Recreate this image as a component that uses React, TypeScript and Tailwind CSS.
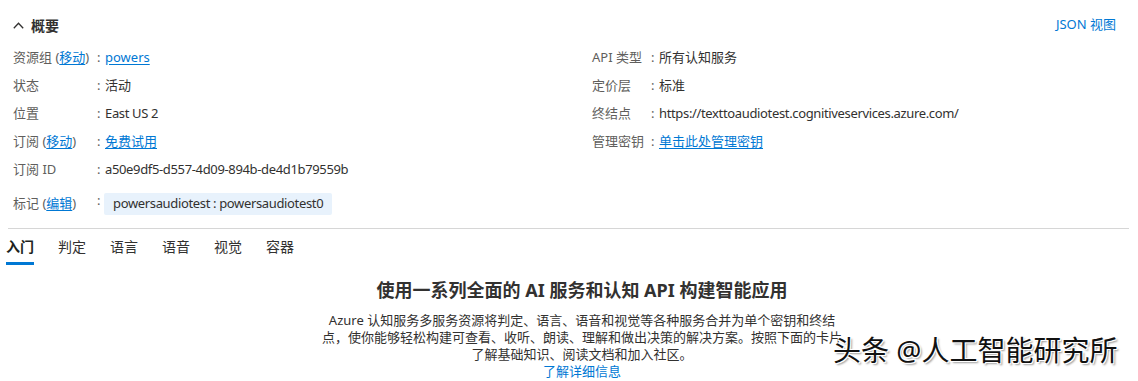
const font = { fontFamily: '"Noto Sans", "Noto Sans CJK SC", sans-serif' };

type Row = { label: React.ReactNode; value: React.ReactNode };

const Link = ({ children }: { children: React.ReactNode }) => (
  <a className="text-[#0078d4] underline underline-offset-2 cursor-pointer">{children}</a>
);

// latin strings in the reference are narrower (Segoe UI), so tighten them a bit
const Latin = ({ children }: { children: React.ReactNode }) => (
  <span className="tracking-[-0.35px]">{children}</span>
);

const leftRows: Row[] = [
  { label: <>资源组 (<Link>移动</Link>)</>, value: <Link>powers</Link> },
  { label: '状态', value: '活动' },
  { label: '位置', value: <Latin>East US 2</Latin> },
  { label: <>订阅 (<Link>移动</Link>)</>, value: <Link>免费试用</Link> },
  { label: '订阅 ID', value: <Latin>a50e9df5-d557-4d09-894b-de4d1b79559b</Latin> },
];

const rightRows: Row[] = [
  { label: 'API 类型', value: '所有认知服务' },
  { label: '定价层', value: '标准' },
  { label: '终结点', value: <Latin>https://texttoaudiotest.cognitiveservices.azure.com/</Latin> },
  { label: '管理密钥', value: <Link>单击此处管理密钥</Link> },
];

const tabs = ['入门', '判定', '语言', '语音', '视觉', '容器'];

const InfoRow = ({ row, labelW }: { row: Row; labelW: string }) => (
  <div className="flex items-center h-[28px] text-[13px] whitespace-nowrap">
    <div className={`${labelW} text-[#605e5c]`}>{row.label}</div>
    <div className="w-[8px] text-[#605e5c]">:</div>
    <div className="text-[#323130]">{row.value}</div>
  </div>
);

export default function App() {
  return (
    <div className="relative w-[1138px] h-[381px] overflow-hidden bg-white" style={font}>
      {/* header */}
      <div className="flex items-center justify-between h-[20px] mt-[15px] pl-[13px] pr-[22px]">
        <div className="flex items-center gap-[7px]">
          <svg width="11" height="7" viewBox="0 0 11 7" fill="none">
            <polyline points="0.8,6.2 5.5,1.2 10.2,6.2" stroke="#323130" strokeWidth="1.3" />
          </svg>
          <span className="text-[14px] font-semibold text-[#323130]">概要</span>
        </div>
        <a className="text-[13px] text-[#0078d4]">JSON 视图</a>
      </div>

      {/* essentials */}
      <div className="grid grid-cols-[579px_1fr] pl-[13px] mt-[9px]">
        <div className="flex flex-col">
          {leftRows.map((r, i) => (
            <InfoRow key={i} row={r} labelW="w-[84px]" />
          ))}
        </div>
        <div className="flex flex-col">
          {rightRows.map((r, i) => (
            <InfoRow key={i} row={r} labelW="w-[59px]" />
          ))}
        </div>
      </div>
      <div className="flex items-center h-[22px] mt-[9px] pl-[13px] text-[13px] whitespace-nowrap">
        <div className="w-[84px] text-[#605e5c]">标记 (<Link>编辑</Link>)</div>
        <div className="w-[7px] text-[#605e5c] -mt-[6px]">:</div>
        <div className="h-[22px] flex items-center px-[9px] bg-[#e8f2fc] rounded-[2px] text-[#323130]">
          <Latin>powersaudiotest : powersaudiotest0</Latin>
        </div>
      </div>

      <div className="mt-[13px] ml-[8px] w-[1121px] border-t border-[#d6d6d6]" />

      {/* tabs */}
      <div className="flex gap-[24px] pl-[6px] mt-[9px]">
        {tabs.map((t, i) => (
          <div
            key={t}
            className={`text-[14px] leading-[18px] pb-[6px] border-b-[3px] ${
              i === 0 ? 'border-[#0078d4] text-[#201f1e] font-semibold' : 'border-transparent text-[#323130]'
            }`}
          >
            {t}
          </div>
        ))}
      </div>

      {/* intro */}
      <div className="flex flex-col items-center pl-[26px] mt-[13px]">
        <h2 className="text-[18px] leading-[24px] font-bold text-[#323130]">
          使用一系列全面的 AI 服务和认知 API 构建智能应用
        </h2>
        <p className="w-[530px] mt-[10px] text-center text-[13px] leading-[17px] text-[#323130]">
          Azure 认知服务多服务资源将判定、语言、语音和视觉等各种服务合并为单个密钥和终结点，使你能够轻松构建可查看、收听、朗读、理解和做出决策的解决方案。按照下面的卡片了解基础知识、阅读文档和加入社区。
        </p>
        <a className="text-[13px] leading-[17px] text-[#0078d4]">了解详细信息</a>
      </div>

      {/* watermark */}
      <div
        className="absolute left-[833px] top-[333px] text-[28px] leading-[34px] text-[#111] whitespace-nowrap"
        style={{ textShadow: '1px 1px 0 #fff, -1px -1px 0 #fff, 1px -1px 0 #fff, -1px 1px 0 #fff, 2px 2px 2px rgba(0,0,0,0.4)' }}
      >
        头条 @人工智能研究所
      </div>
    </div>
  );
}
